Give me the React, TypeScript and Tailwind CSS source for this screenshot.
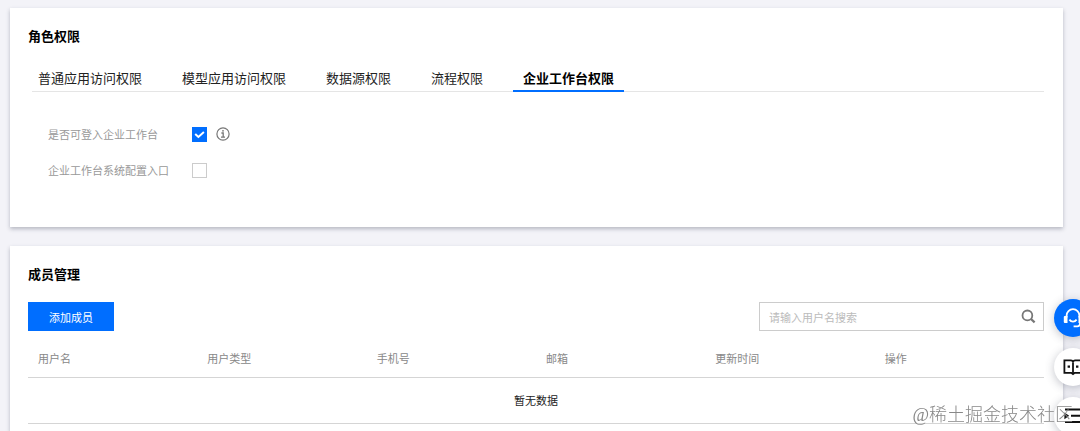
import React, { useState } from 'react';
import { clsx } from 'clsx';

const tabs = ['普通应用访问权限', '模型应用访问权限', '数据源权限', '流程权限', '企业工作台权限'];

const columns = ['用户名', '用户类型', '手机号', '邮箱', '更新时间', '操作'];

interface PermissionRowProps {
  id: string;
  label: string;
  checked: boolean;
  onChange: (checked: boolean) => void;
  children?: React.ReactNode;
}

function InfoIcon() {
  return (
    <svg width="14" height="14" viewBox="0 0 14 14" fill="none" stroke="#777" aria-hidden="true">
      <circle cx="7" cy="7" r="6.1" strokeWidth="1.2" />
      <path d="M5.4 6h1.8v4M5 10.2h4" strokeWidth="1.3" />
      <circle cx="7" cy="3.8" r="0.9" fill="#777" stroke="none" />
    </svg>
  );
}

function SearchIcon() {
  return (
    <svg width="15" height="15" viewBox="0 0 15 15" fill="none" stroke="#777" strokeWidth="1.8" aria-hidden="true">
      <circle cx="6.4" cy="6.4" r="4.9" />
      <path d="M10 10l3.6 3.4" strokeWidth="2.2" />
    </svg>
  );
}

function HeadsetIcon() {
  return (
    <svg width="20" height="20" viewBox="0 0 20 20" fill="none" stroke="#fff" strokeWidth="1.8" aria-hidden="true">
      <path d="M3.6 9.4V7.6a6.4 6.4 0 0 1 12.8 0v1.8" />
      <path d="M.8 9a1 1 0 0 1 1-1h2.7v7H1.8a1 1 0 0 1-1-1zM15.5 8h2.7a1 1 0 0 1 1 1v5a1 1 0 0 1-1 1h-2.7z" fill="#fff" stroke="none" />
      <path d="M6.4 11.6c1.9 2.6 5.3 2.6 7.2 0" />
      <path d="M17 14v1.6c0 1.8-1.2 2.8-2.8 2.8H10.6" />
    </svg>
  );
}

function BookIcon() {
  return (
    <svg width="20" height="20" viewBox="0 0 20 20" fill="none" stroke="#111" strokeWidth="1.8" aria-hidden="true">
      <path d="M1.4 3.4h6.4c1.3 0 2.2.8 2.2 2 0-1.2.9-2 2.2-2h6.4v12.4h-6.9L10 17.2l-1.7-1.4H1.4z" />
      <path d="M10 5.4V17" />
      <path d="M4.6 9.6h2.4M13 9.6h2.4" strokeWidth="2.2" />
    </svg>
  );
}

function MenuIcon() {
  return (
    <svg width="20" height="20" viewBox="0 0 20 20" fill="none" stroke="#111" strokeWidth="2" aria-hidden="true">
      <path d="M2 3.6h17M8 9.8h11M2 16h17" />
      <path d="M1.4 6.4l4.8 3.4-4.8 3.4z" fill="#111" stroke="none" />
    </svg>
  );
}

function PermissionRow({ id, label, checked, onChange, children }: PermissionRowProps) {
  return (
    <div className="flex items-center h-5">
      <label htmlFor={id} className="w-36 shrink-0 text-[11px] text-[#999]">
        {label}
      </label>
      <span className="grid place-items-center">
        <input
          id={id}
          type="checkbox"
          checked={checked}
          onChange={(e) => onChange(e.target.checked)}
          className="col-start-1 row-start-1 appearance-none size-[15px] border border-[#ccc] bg-white checked:border-[#006eff] checked:bg-[#006eff]"
        />
        {checked && (
          <svg className="col-start-1 row-start-1 pointer-events-none" width="11" height="11" viewBox="0 0 11 11" fill="none" stroke="#fff" strokeWidth="2">
            <path d="M1.2 4.9l3.2 3L9.9 3" />
          </svg>
        )}
      </span>
      {children}
    </div>
  );
}

export default function App() {
  const [activeTab, setActiveTab] = useState(4);
  const [canLogin, setCanLogin] = useState(true);
  const [canConfig, setCanConfig] = useState(false);
  const [keyword, setKeyword] = useState('');

  return (
    <div className="min-h-screen flex flex-col gap-[19px] overflow-hidden bg-[#f3f3f8] pt-2 pl-2.5 pr-[17px] font-['Noto_Sans_CJK_SC',sans-serif] text-[11px] leading-5 text-black">
      <section className="bg-white pl-[18px] pr-[19px] pt-[18px] pb-[47px] shadow-[0_2px_4px_rgba(54,58,80,0.32)]">
        <h2 className="text-[13px] leading-5 font-bold">角色权限</h2>
        <nav className="mt-[22px] ml-1 border-b border-[#e5e5e5]">
          <ul className="-ml-1 flex gap-5">
            {tabs.map((tab, i) => (
              <li key={tab} className="-mb-px">
                <button
                  type="button"
                  onClick={() => setActiveTab(i)}
                  className={clsx(
                    'block px-2.5 pb-0.5 border-b-2 text-[13px] leading-5',
                    i === activeTab ? 'border-[#006eff] font-bold' : 'border-transparent text-[#222]'
                  )}
                >
                  {tab}
                </button>
              </li>
            ))}
          </ul>
        </nav>
        <div className="mt-8 pl-5 flex flex-col gap-4">
          <PermissionRow id="can-login" label="是否可登入企业工作台" checked={canLogin} onChange={setCanLogin}>
            <span className="ml-[9px]">
              <InfoIcon />
            </span>
          </PermissionRow>
          <PermissionRow id="can-config" label="企业工作台系统配置入口" checked={canConfig} onChange={setCanConfig} />
        </div>
      </section>

      <section className="flex-1 bg-white pl-[18px] pr-[19px] pt-[18px] shadow-[0_2px_4px_rgba(54,58,80,0.32)]">
        <h2 className="text-[13px] leading-5 font-bold">成员管理</h2>
        <div className="mt-[18px] flex items-center justify-between">
          <button type="button" className="h-[29px] w-[86px] bg-[#006eff] text-white">
            添加成员
          </button>
          <div className="flex items-center h-[29px] w-[285px] border border-[#ccc] pl-[9px] pr-[7px]">
            <input
              type="text"
              aria-label="请输入用户名搜索"
              placeholder="请输入用户名搜索"
              value={keyword}
              onChange={(e) => setKeyword(e.target.value)}
              className="flex-1 min-w-0 outline-none placeholder:text-[#bbb]"
            />
            <button type="button" aria-label="搜索">
              <SearchIcon />
            </button>
          </div>
        </div>
        <table className="w-full table-fixed">
          <thead>
            <tr className="border-b border-[#d5d5d5]">
              {columns.map((col) => (
                <th key={col} className="h-[46px] pt-2 px-2.5 text-left font-normal text-[#888]">
                  {col}
                </th>
              ))}
            </tr>
          </thead>
          <tbody>
            <tr className="border-b border-[#d5d5d5]">
              <td colSpan={6} className="h-[46px] text-center text-[#222]">
                暂无数据
              </td>
            </tr>
          </tbody>
        </table>
      </section>

      {/* Side tools, half hidden behind the window edge */}
      <div className="fixed top-[299px] -right-3 flex flex-col gap-[11px]">
        <button type="button" aria-label="在线客服" className="grid place-items-center size-[38px] rounded-full bg-[#006eff] shadow-[0_2px_10px_rgba(54,58,80,0.3)]">
          <HeadsetIcon />
        </button>
        <button type="button" aria-label="文档" className="grid place-items-center size-[38px] rounded-full bg-white shadow-[0_2px_10px_rgba(54,58,80,0.3)]">
          <BookIcon />
        </button>
        <button type="button" aria-label="目录" className="grid place-items-center size-[38px] rounded-full bg-white shadow-[0_2px_10px_rgba(54,58,80,0.3)]">
          <MenuIcon />
        </button>
      </div>

      <p className="fixed right-[7px] bottom-1 pointer-events-none font-['Liberation_Serif','Noto_Sans_CJK_SC',serif] text-[18px] leading-6 font-light text-[#888]">
        @稀土掘金技术社区
      </p>
    </div>
  );
}
